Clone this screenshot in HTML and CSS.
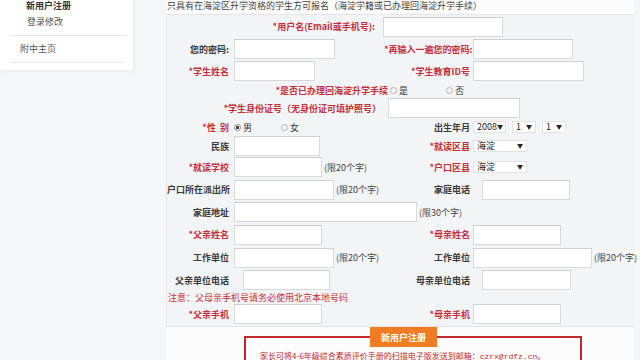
FILE: index.html
```html
<!DOCTYPE html>
<html lang="zh-CN">
<head>
    <meta charset="UTF-8">
    <title>新用户注册</title>
    <link rel="stylesheet" href="styles.css">
</head>
<body>
    <div class="side-col">
        <div class="side-panel">
            <div class="side-item cur">新用户注册</div>
            <div class="side-item sub">登录修改</div>
            <div class="side-item home">附中主页</div>
        </div>
    </div>

    <div class="main">
        <div class="tip">只具有在海淀区升学资格的学生方可报名（海淀学籍或已办理回海淀升学手续）</div>

        <div class="form">
            <div class="row h23">
                <label class="wlab red w1">*用户名(Email或手机号):</label>
                <input class="txt" style="width:120px">
            </div>
            <div class="row h22">
                <label class="lab">您的密码:</label>
                <div class="lcol"><input class="txt" type="password" style="width:101px"></div>
                <label class="rlab red">*再输入一遍您的密码:</label>
                <input class="txt" type="password" style="width:100px">
            </div>
            <div class="row h22">
                <label class="lab red">*学生姓名</label>
                <div class="lcol"><input class="txt" style="width:81px"></div>
                <label class="rlab red">*学生教育ID号</label>
                <input class="txt" style="width:111px">
            </div>
            <div class="row h16">
                <label class="wlab red w4">*是否已办理回海淀升学手续</label>
                <span class="opt"><input type="radio" name="back">是</span>
                <span class="opt"><input type="radio" name="back">否</span>
            </div>
            <div class="row h20">
                <label class="wlab red w5">*学生身份证号（无身份证可填护照号）</label>
                <input class="txt" style="width:132px">
            </div>
            <div class="row h18">
                <label class="lab red">*性&nbsp;&nbsp;别</label>
                <div class="lcol">
                    <span class="opt sex"><input type="radio" name="sex" checked>男</span>
                    <span class="opt"><input type="radio" name="sex">女</span>
                </div>
                <label class="rlab">出生年月</label>
                <div class="sel y"><span>2008</span><i>▼</i></div>
                <div class="sel m"><span>1</span><i>▼</i></div>
                <div class="sel m"><span>1</span><i>▼</i></div>
            </div>
            <div class="row h20">
                <label class="lab">民族</label>
                <div class="lcol"><input class="txt" style="width:86px"></div>
                <label class="rlab red">*就读区县</label>
                <div class="sel d"><span>海淀</span><i>▼</i></div>
            </div>
            <div class="row h22">
                <label class="lab red">*就读学校</label>
                <div class="lcol"><input class="txt" style="width:88px"><span class="note">(限20个字)</span></div>
                <label class="rlab red">*户口区县</label>
                <div class="sel d"><span>海淀</span><i>▼</i></div>
            </div>
            <div class="row h23">
                <label class="lab">户口所在派出所</label>
                <div class="lcol"><input class="txt" style="width:100px"><span class="note">(限20个字)</span></div>
                <label class="rlab">家庭电话</label>
                <input class="txt far" style="width:88px">
            </div>
            <div class="row h22">
                <label class="lab">家庭地址</label>
                <input class="txt" style="width:183px"><span class="note">(限30个字)</span>
            </div>
            <div class="row h23">
                <label class="lab red">*父亲姓名</label>
                <div class="lcol"><input class="txt" style="width:88px"></div>
                <label class="rlab red">*母亲姓名</label>
                <input class="txt" style="width:88px">
            </div>
            <div class="row h23">
                <label class="lab">工作单位</label>
                <div class="lcol"><input class="txt" style="width:100px"><span class="note">(限20个字)</span></div>
                <label class="rlab">工作单位</label>
                <input class="txt" style="width:119px"><span class="note">(限20个字)</span>
            </div>
            <div class="row h22">
                <label class="lab">父亲单位电话</label>
                <div class="lcol"><input class="txt far" style="width:87px"></div>
                <label class="rlab">母亲单位电话</label>
                <input class="txt far" style="width:89px">
            </div>
            <div class="row h12">
                <span class="warn">注意：父母亲手机号请务必使用北京本地号码</span>
            </div>
            <div class="row h22">
                <label class="lab red">*父亲手机</label>
                <div class="lcol"><input class="txt" style="width:88px"></div>
                <label class="rlab red">*母亲手机</label>
                <input class="txt" style="width:88px">
            </div>
        </div>

        <div class="submit-area">
            <button class="btn">新用户注册</button>
            <div class="notice">家长可将4-6年级综合素质评价手册的扫描电子版发送到邮箱：<span class="mail">czrx@rdfz.cn</span>。</div>
        </div>
    </div>
</body>
</html>
```

FILE: styles.css
```css
body {
    margin: 0;
    width: 640px;
    height: 360px;
    overflow: hidden;
    display: flex;
    background: #f5f6f8;
    font-family: "Noto Sans CJK SC", "Liberation Sans", sans-serif;
    font-size: 9px;
    color: #333;
}

/* left menu */
.side-col {
    width: 166px;
    flex-shrink: 0;
}

.side-panel {
    width: 133px;
    height: 70px;
    background: #fff;
    box-shadow: 1px 1px 3px #e8e9ec;
}

.side-item {
    line-height: 14px;
    color: #555;
}

.side-item.cur {
    line-height: 12px;
    padding-left: 26px;
    font-weight: bold;
    color: #333;
}

.side-item.sub {
    margin: 3px 6px 0 10px;
    padding: 0 0 6px 17px;
    border-bottom: 1px solid #e6e7ea;
}

.side-item.home {
    margin: 0 8px 0 10px;
    padding: 6px 0 6px 10px;
    border-bottom: 1px solid #e6e7ea;
}

/* main column */
.main {
    width: 468px;
    height: 360px;
    background: #fcfcfc;
    display: flex;
    flex-direction: column;
}

.main > * {
    flex-shrink: 0;
}

.tip {
    height: 14px;
    line-height: 11px;
    padding-left: 1px;
    color: #444;
    white-space: nowrap;
}

.form {
    background: #f3f4f6;
    border: 1px solid #e3e4e7;
    border-right: none;
    padding-bottom: 1px;
}

.row {
    display: flex;
    align-items: center;
    white-space: nowrap;
}

.h12 { height: 12px; }
.h16 { height: 16px; }
.h18 { height: 18px; }
.h20 { height: 20px; }
.h22 { height: 22px; }
.h23 { height: 23px; }

label {
    font-weight: bold;
    color: #3a3a3a;
}

.red {
    color: #c3303c;
}

.lab {
    width: 62px;
    text-align: right;
    margin-right: 5px;
    flex-shrink: 0;
}

.lcol {
    width: 150px;
    display: flex;
    align-items: center;
    flex-shrink: 0;
}

.rlab {
    width: 86px;
    text-align: right;
    margin-right: 3px;
    flex-shrink: 0;
}

.wlab {
    text-align: right;
    flex-shrink: 0;
}

.w1 { width: 208px; margin-right: 8px; }
.w4 { width: 221px; margin-right: 2px; }
.w5 { width: 214px; margin-right: 7px; }

.txt {
    box-sizing: border-box;
    height: 20px;
    margin: 0;
    padding: 0;
    border: 1px solid #d9d9d9;
    border-top-color: #cfcfcf;
    background: #fff;
    flex-shrink: 0;
}

.txt.far { margin-left: 9px; }

.note {
    margin-left: 2px;
    color: #444;
    flex-shrink: 0;
}

.opt {
    display: flex;
    align-items: center;
    margin-right: 38px;
}

.opt.sex {
    margin-right: 29px;
}

.opt input {
    appearance: none;
    width: 7px;
    height: 7px;
    margin: 0 2px 0 0;
    border: 1px solid #b4b4b4;
    border-radius: 50%;
    background: #f4f4f4;
    box-sizing: border-box;
}

.opt input:checked {
    background: radial-gradient(circle, #444 0 1.5px, #fff 2px);
    border-color: #888;
}

.sel {
    box-sizing: border-box;
    height: 12px;
    display: flex;
    align-items: center;
    justify-content: space-between;
    padding: 0 3px;
    margin-right: 6px;
    background: #fff;
    border: 1px solid #e2e2e2;
    color: #222;
    line-height: 10px;
}

.sel i {
    font-style: normal;
    font-size: 6px;
}

.sel.y { width: 33px; }
.sel.m { width: 24px; }
.sel.d { width: 54px; }

.warn {
    padding-left: 1px;
    color: #c3303c;
}

/* bottom */
.submit-area {
    display: flex;
    flex-direction: column;
}

.btn {
    position: relative;
    z-index: 1;
    width: 67px;
    height: 20px;
    margin-left: 204px;
    padding: 0;
    border: none;
    background: #f07c24;
    color: #fff;
    font-family: inherit;
    font-size: 9px;
    font-weight: bold;
}

.notice {
    width: 338px;
    height: 30px;
    box-sizing: border-box;
    margin: -11px 0 0 78px;
    padding: 12px 0 0 14px;
    border: 2px solid #c0282d;
    border-bottom: none;
    color: #c0282d;
    font-size: 8px;
    line-height: 12px;
    white-space: nowrap;
}

.mail {
    font-family: "Liberation Mono", monospace;
}
```
